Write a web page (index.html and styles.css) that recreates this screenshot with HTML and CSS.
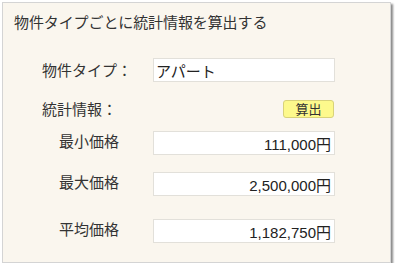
FILE: index.html
```html
<!DOCTYPE html>
<html lang="ja">
<head>
<meta charset="utf-8">
<link rel="stylesheet" href="styles.css">
</head>
<body>
<div class="panel">
  <h1 class="title">物件タイプごとに統計情報を算出する</h1>
  <div class="row row-type">
    <span class="label">物件タイプ：</span>
    <input class="field field-left" type="text" value="アパート" readonly>
  </div>
  <div class="row row-stats">
    <span class="label">統計情報：</span>
    <div class="btn-cell"><button class="btn" type="button">算出</button></div>
  </div>
  <div class="row row-min">
    <span class="label sub">最小価格</span>
    <input class="field" type="text" value="111,000円" readonly>
  </div>
  <div class="row row-max">
    <span class="label sub">最大価格</span>
    <input class="field" type="text" value="2,500,000円" readonly>
  </div>
  <div class="row row-avg">
    <span class="label sub">平均価格</span>
    <input class="field" type="text" value="1,182,750円" readonly>
  </div>
</div>
</body>
</html>
```
FILE: styles.css
```css
html, body {
  margin: 0;
  padding: 0;
  background: #ffffff;
}
body {
  font-family: "Noto Sans CJK JP", "Liberation Sans", sans-serif;
  color: #333333;
}
.panel {
  margin: 2px 0 0 2px;
  width: 387px;
  height: 259px;
  border: 1px solid #d4d4d4;
  background: #faf6ee;
  box-shadow: 2px 2px 2px #8a8a8a;
  padding: 9px 0 0 0;
  box-sizing: content-box;
  height: 250px;
}
.title {
  margin: 0 0 0 11px;
  font-size: 15px;
  font-weight: normal;
  line-height: 20px;
  letter-spacing: -0.1px;
}
.row {
  display: grid;
  grid-template-columns: 111px 182px;
  align-items: center;
  padding-left: 39px;
}
.label {
  font-size: 15px;
  line-height: 20px;
}
.label.sub {
  padding-left: 17px;
  position: relative;
  top: -2px;
}
.row-type { margin-top: 26px; }
.row-stats { margin-top: 17px; }
.row-min { margin-top: 12px; }
.row-max { margin-top: 17px; }
.row-avg { margin-top: 23px; }
.field {
  box-sizing: border-box;
  width: 182px;
  height: 24px;
  margin: 0;
  border: 1px solid #e2e0da;
  background: #ffffff;
  font-family: "Liberation Sans", "Noto Sans CJK JP", sans-serif;
  font-size: 15px;
  color: #222222;
  text-align: right;
  padding: 0 3px 0 2px;
  outline: none;
}
.field-left {
  text-align: left;
  font-family: "Noto Sans CJK JP", "Liberation Sans", sans-serif;
}
.btn-cell {
  display: flex;
  justify-content: flex-end;
}
.btn {
  box-sizing: border-box;
  width: 51px;
  height: 18px;
  margin: 0 1px 0 0;
  padding: 0;
  border: 1px solid #d8d27a;
  border-radius: 3px;
  background: #fdf98c;
  font-family: "Noto Sans CJK JP", sans-serif;
  font-size: 13px;
  line-height: 16px;
  color: #333333;
}
```
